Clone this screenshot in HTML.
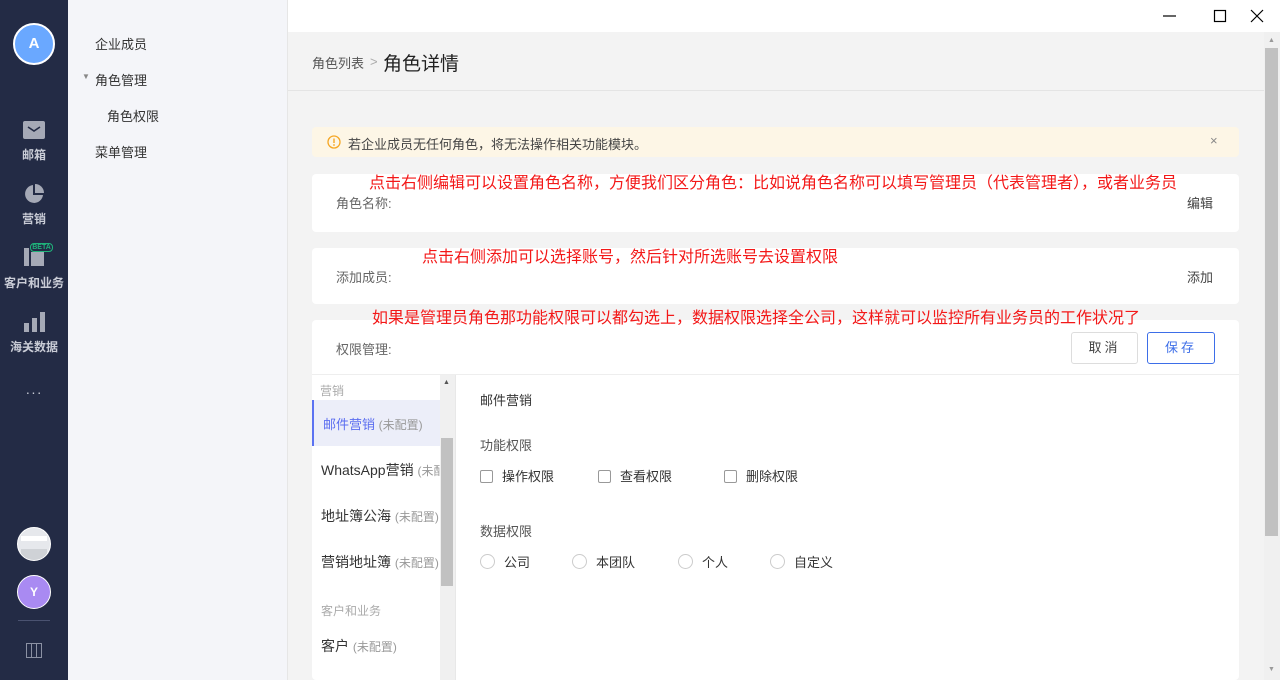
<!DOCTYPE html>
<html><head><meta charset="utf-8"><style>
*{margin:0;padding:0;box-sizing:border-box}
body{width:1280px;height:680px;overflow:hidden;position:relative;background:#f3f3f3;font-family:"Liberation Sans","Noto Sans CJK SC",sans-serif;font-size:13px;color:#333}
.abs{position:absolute}
#side{left:0;top:0;width:68px;height:680px;background:#232b45}
.nav{position:absolute;left:0;width:68px;text-align:center;color:#c9ccd6;font-size:12px}
#sub{left:68px;top:0;width:220px;height:680px;background:#f4f5f9;border-right:1px solid #e6e6e6}
#sub div{position:absolute;font-size:13px;color:#333}
#tb{left:288px;top:0;width:992px;height:32px;background:#fff}
#hd{left:288px;top:32px;width:976px;height:59px;background:#f3f3f3;border-bottom:1px solid #e4e4e4}
.card{position:absolute;left:312px;width:927px;background:#fff;border-radius:4px}
.red{position:absolute;color:#f31818;font-size:16px;white-space:nowrap}
.lbl{position:absolute;color:#666;font-size:13px}
.cb{position:absolute;width:13px;height:13px;border:1px solid #999;border-radius:2px;background:#fff}
.rd{position:absolute;width:15px;height:15px;border:1px solid #ccc;border-radius:50%;background:#fff}
.li{position:absolute;left:8px;font-size:13px;color:#333;white-space:nowrap}
.li span{color:#999;font-size:12px}
</style></head><body>
<div id="side" class="abs">
 <div class="abs" style="left:13px;top:23px;width:42px;height:42px;border-radius:50%;background:#6aa8ff;border:2px solid #fff;color:#fff;font-weight:bold;font-size:15px;text-align:center;line-height:38px">A</div>
 <div class="abs" style="left:23px;top:121px;width:22px;height:18px;background:#a5a9b6;border-radius:2px"><svg width="22" height="18"><path d="M5 6 L11 10 L17 6" stroke="#232b45" stroke-width="1.6" fill="none"/></svg></div>
 <div class="nav" style="top:146px;font-weight:bold">邮箱</div>
 <svg class="abs" style="left:23px;top:183px" width="22" height="22"><path d="M10 2 A9 9 0 1 0 20 12 L10 12 Z" fill="#a5a9b6"/><path d="M12 1 A9 9 0 0 1 21 10 L12 10 Z" fill="#a5a9b6"/></svg>
 <div class="nav" style="top:210px;font-weight:bold">营销</div>
 <div class="abs" style="left:24px;top:248px;width:5px;height:18px;background:#a5a9b6"></div>
 <div class="abs" style="left:31px;top:252px;width:13px;height:14px;background:#a5a9b6"></div>
 <div class="abs" style="left:30px;top:243px;width:23px;height:9px;border:1px solid #1fb37a;border-radius:4px;background:#232b45;color:#1fb37a;font-size:7px;line-height:7px;text-align:center;font-weight:bold">BETA</div>
 <div class="nav" style="top:274px;font-weight:bold">客户和业务</div>
 <svg class="abs" style="left:24px;top:311px" width="21" height="21"><rect x="0" y="12" width="5" height="9" fill="#a5a9b6"/><rect x="8" y="7" width="5" height="14" fill="#a5a9b6"/><rect x="16" y="1" width="5" height="20" fill="#a5a9b6"/></svg>
 <div class="nav" style="top:338px;font-weight:bold">海关数据</div>
 <div class="nav" style="top:384px;font-size:14px;letter-spacing:1px">···</div>
 <div class="abs" style="left:17px;top:527px;width:34px;height:34px;border-radius:50%;background:#e6e8ec;border:1px solid #fff;overflow:hidden"><div style="margin:8px 3px;height:5px;background:#fff"></div><div style="margin:0 3px;height:12px;background:#cfd2d6"></div></div>
 <div class="abs" style="left:17px;top:575px;width:34px;height:34px;border-radius:50%;background:#a98af2;border:1px solid #fff;color:#fff;font-weight:bold;font-size:12px;text-align:center;line-height:32px">Y</div>
 <div class="abs" style="left:18px;top:620px;width:32px;height:1px;background:#4a5270"></div>
 <svg class="abs" style="left:26px;top:643px" width="16" height="15"><rect x="0.5" y="0.5" width="15" height="14" fill="none" stroke="#8b91a3"/><path d="M5.5 1v13M10.5 1v13" stroke="#8b91a3"/></svg>
</div>
<div id="sub" class="abs">
 <div style="left:27px;top:34px">企业成员</div>
 <div style="left:14px;top:72px;font-size:8px;color:#888">▼</div>
 <div style="left:27px;top:70px">角色管理</div>
 <div style="left:39px;top:106px">角色权限</div>
 <div style="left:27px;top:142px">菜单管理</div>
</div>
<div id="tb" class="abs">
 <svg class="abs" style="left:870px;top:8px" width="110" height="16"><path d="M5 8h13" stroke="#000" stroke-width="1.2"/><rect x="56.5" y="2.5" width="11" height="11" fill="none" stroke="#000" stroke-width="1.2"/><path d="M93 2l12 12M105 2l-12 12" stroke="#000" stroke-width="1.2"/></svg>
</div>
<div id="hd" class="abs">
 <span class="abs" style="left:24px;top:21px;font-size:13px;color:#555">角色列表</span>
 <span class="abs" style="left:82px;top:22px;color:#aaa;font-size:13px">&gt;</span>
 <span class="abs" style="left:95px;top:17px;font-size:19px;color:#222">角色详情</span>
</div>
<div class="abs" style="left:1264px;top:32px;width:16px;height:648px;background:#f0f0f0"></div>
<div class="abs" style="left:1265px;top:48px;width:13px;height:488px;background:#c1c1c1"></div>
<div class="abs" style="left:1268px;top:37px;font-size:7px;color:#999">▲</div>
<div class="abs" style="left:1268px;top:666px;font-size:7px;color:#999">▼</div>

<div class="card" style="top:127px;height:30px;background:#fdf6e6">
 <svg class="abs" style="left:15px;top:8px" width="14" height="14"><circle cx="7" cy="7" r="6" fill="none" stroke="#f5a623" stroke-width="1.3"/><path d="M7 3.5v4.5" stroke="#f5a623" stroke-width="1.4"/><circle cx="7" cy="10" r=".9" fill="#f5a623"/></svg>
 <span class="abs" style="left:36px;top:7px;color:#444;font-size:13px">若企业成员无任何角色，将无法操作相关功能模块。</span>
 <span class="abs" style="left:898px;top:6px;color:#888;font-size:13px">×</span>
</div>
<div class="card" style="top:174px;height:58px">
 <span class="lbl" style="left:24px;top:19px">角色名称:</span>
 <span class="abs" style="left:875px;top:19px;color:#444">编辑</span>
</div>
<div class="card" style="top:248px;height:56px">
 <span class="lbl" style="left:24px;top:19px">添加成员:</span>
 <span class="abs" style="left:875px;top:19px;color:#444">添加</span>
</div>
<div class="card" style="top:320px;height:360px">
 <span class="lbl" style="left:24px;top:19px">权限管理:</span>
 <div class="abs" style="left:759px;top:12px;width:67px;height:32px;border:1px solid #ddd;border-radius:3px;text-align:center;line-height:30px;color:#444;letter-spacing:3px">取消</div>
 <div class="abs" style="left:835px;top:12px;width:68px;height:32px;border:1px solid #3d6ee8;border-radius:3px;text-align:center;line-height:30px;color:#3d6ee8;letter-spacing:3px">保存</div>
 <div class="abs" style="left:0;top:54px;width:927px;height:1px;background:#eee"></div>
 <div class="abs" style="left:0;top:55px;width:128px;height:305px;overflow:hidden">
  <div class="li" style="top:7px;color:#aaa;font-size:12px">营销</div>
  <div class="abs" style="left:0;top:25px;width:128px;height:46px;background:#eceef9;border-left:2px solid #5b72f2"></div>
  <div class="li" style="top:39px;left:11px;color:#5b6ef0">邮件营销 <span>(未配置)</span></div>
  <div class="li" style="top:85px;left:9px;font-size:14px">WhatsApp营销 <span>(未配置)</span></div>
  <div class="li" style="top:131px;left:9px;font-size:14px">地址簿公海 <span>(未配置)</span></div>
  <div class="li" style="top:177px;left:9px;font-size:14px">营销地址簿 <span>(未配置)</span></div>
  <div class="li" style="top:227px;left:9px;color:#aaa;font-size:12px">客户和业务</div>
  <div class="li" style="top:261px;left:9px;font-size:14px">客户 <span>(未配置)</span></div>
 </div>
 <div class="abs" style="left:128px;top:55px;width:15px;height:305px;background:#f0f0f0"></div>
 <div class="abs" style="left:131px;top:59px;font-size:7px;color:#555">▲</div>
 <div class="abs" style="left:129px;top:118px;width:12px;height:148px;background:#c1c1c1"></div>
 <div class="abs" style="left:143px;top:55px;width:1px;height:305px;background:#e8e8e8"></div>
 <span class="abs" style="left:168px;top:70px;color:#333">邮件营销</span>
 <span class="abs" style="left:168px;top:115px;color:#555">功能权限</span>
 <div class="cb" style="left:168px;top:150px"></div><span class="abs" style="left:190px;top:146px">操作权限</span>
 <div class="cb" style="left:286px;top:150px"></div><span class="abs" style="left:308px;top:146px">查看权限</span>
 <div class="cb" style="left:412px;top:150px"></div><span class="abs" style="left:434px;top:146px">删除权限</span>
 <span class="abs" style="left:168px;top:201px;color:#555">数据权限</span>
 <div class="rd" style="left:168px;top:234px"></div><span class="abs" style="left:192px;top:232px">公司</span>
 <div class="rd" style="left:260px;top:234px"></div><span class="abs" style="left:284px;top:232px">本团队</span>
 <div class="rd" style="left:366px;top:234px"></div><span class="abs" style="left:390px;top:232px">个人</span>
 <div class="rd" style="left:458px;top:234px"></div><span class="abs" style="left:482px;top:232px">自定义</span>
</div>
<div class="red" style="left:369px;top:169px">点击右侧编辑可以设置角色名称，方便我们区分角色：比如说角色名称可以填写管理员（代表管理者），或者业务员</div>
<div class="red" style="left:422px;top:243px">点击右侧添加可以选择账号，然后针对所选账号去设置权限</div>
<div class="red" style="left:372px;top:304px">如果是管理员角色那功能权限可以都勾选上，数据权限选择全公司，这样就可以监控所有业务员的工作状况了</div>
</body></html>
